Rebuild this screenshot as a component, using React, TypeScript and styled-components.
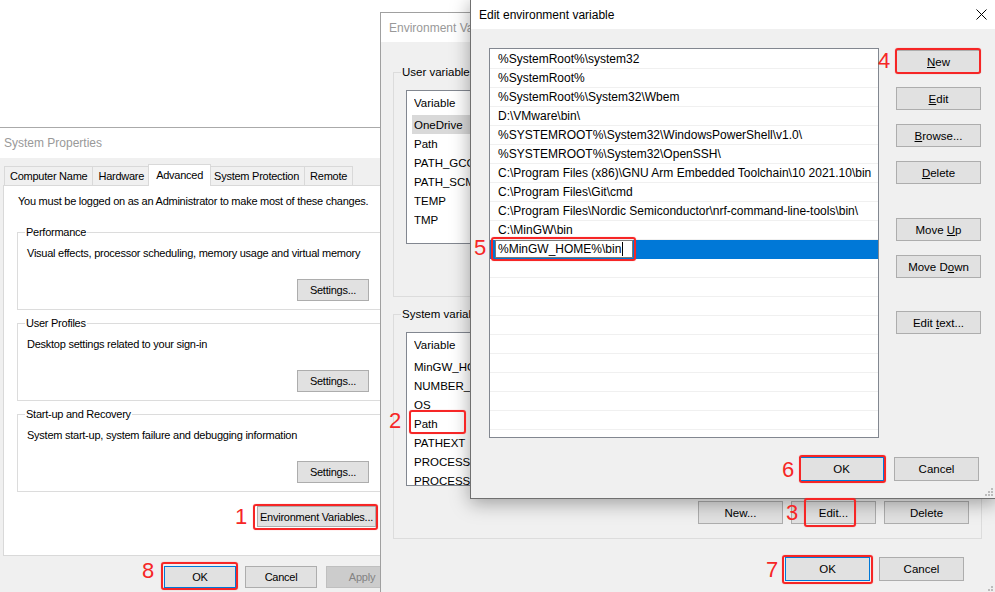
import React from 'react';
import styled, { createGlobalStyle } from 'styled-components';

const GlobalStyle = createGlobalStyle`
  html, body {
    margin: 0;
    padding: 0;
    background: #fff;
  }
  body {
    font-family: "Liberation Sans", Arial, sans-serif;
    color: #000;
  }
`;

const Desktop = styled.div`
  position: relative;
  width: 995px;
  height: 592px;
  overflow: hidden;
  background: #fff;
`;

// windows sit on a free desktop, so they are placed by coordinates
const Window = styled.div<{
  $x: number;
  $y: number;
  $w: number;
  $h: number;
  $z: number;
  $edge: string;
  $shadow?: boolean;
}>`
  position: absolute;
  left: ${(p) => p.$x}px;
  top: ${(p) => p.$y}px;
  width: ${(p) => p.$w}px;
  height: ${(p) => p.$h}px;
  z-index: ${(p) => p.$z};
  box-sizing: border-box;
  border: 1px solid ${(p) => p.$edge};
  background: #f0f0f0;
  display: flex;
  flex-direction: column;
  box-shadow: ${(p) => (p.$shadow ? '0 4px 18px rgba(0, 0, 0, 0.35)' : 'none')};
`;

const TitleBar = styled.div<{ $h: number; $indent: number; $active?: boolean }>`
  flex: none;
  height: ${(p) => p.$h}px;
  background: #fff;
  display: flex;
  align-items: center;
  padding-left: ${(p) => p.$indent}px;
  font-size: 12px;
  color: ${(p) => (p.$active ? '#000' : '#999')};
  white-space: nowrap;
`;

const CloseBox = styled.div`
  margin-left: auto;
  width: 30px;
  height: 100%;
  display: flex;
  align-items: center;
  justify-content: center;
`;

const Body = styled.div<{ $fs: number; $ls: number }>`
  flex: 1;
  min-height: 0;
  display: flex;
  flex-direction: column;
  align-items: flex-start;
  font-size: ${(p) => p.$fs}px;
  letter-spacing: ${(p) => p.$ls}px;
  line-height: 14px;
  white-space: nowrap;
`;

const SysBody = styled(Body)`
  padding: 8px 6px 0 6px;
`;

const EnvBody = styled(Body)`
  padding: 0 0 0 12px;
`;

const EditBody = styled(Body)`
  padding: 19px 0 0 18px;
`;

const Btn = styled.button<{ $w?: number; $h?: number; $default?: boolean }>`
  flex: none;
  box-sizing: border-box;
  width: ${(p) => p.$w ?? 85}px;
  height: ${(p) => p.$h ?? 23}px;
  margin: 0;
  padding: 0;
  background: #e1e1e1;
  border: 1px solid ${(p) => (p.$default ? '#0078d7' : '#adadad')};
  color: #000;
  font: inherit;
  letter-spacing: inherit;
  line-height: 14px;
  white-space: nowrap;

  &:disabled {
    background: #cccccc;
    border-color: #bfbfbf;
    color: #838383;
  }
`;

const DialogButtons = styled.div<{ $mt: number; $gap: number; $pr: number }>`
  align-self: stretch;
  display: flex;
  justify-content: flex-end;
  gap: ${(p) => p.$gap}px;
  margin-top: ${(p) => p.$mt}px;
  padding-right: ${(p) => p.$pr}px;
`;

/* ---------- System Properties ---------- */

const TabRow = styled.div`
  position: relative;
  z-index: 1;
  display: flex;
  align-items: flex-end;
  height: 20px;
  margin: 0 0 -1px 1px;
`;

const Tab = styled.div<{ $selected?: boolean }>`
  box-sizing: border-box;
  height: ${(p) => (p.$selected ? 22 : 19)}px;
  margin: 0 ${(p) => (p.$selected ? -2 : 0)}px ${(p) => (p.$selected ? 0 : 1)}px
    ${(p) => (p.$selected ? -2 : -1)}px;
  padding: ${(p) => (p.$selected ? '0 7px 2px' : '0 5px')};
  display: flex;
  align-items: center;
  border: 1px solid #d9d9d9;
  border-bottom: none;
  background: ${(p) => (p.$selected ? '#fff' : '#f0f0f0')};
  position: relative;
  z-index: ${(p) => (p.$selected ? 2 : 1)};

  &:first-child {
    margin-left: 0;
  }
`;

const TabPanel = styled.div`
  box-sizing: border-box;
  width: 395px;
  height: 371px;
  border: 1px solid #d9d9d9;
  background: #fff;
  display: flex;
  flex-direction: column;
  align-items: flex-start;
`;

const Notice = styled.div`
  margin: 8px 0 0 14px;
`;

const SysGroup = styled.div<{ $mt: number }>`
  box-sizing: border-box;
  width: 370px;
  height: 78px;
  margin: ${(p) => p.$mt}px 0 0 13px;
  border: 1px solid #dcdcdc;
  display: flex;
  flex-direction: column;
  align-items: flex-start;
`;

const Legend = styled.span<{ $bg: string }>`
  height: 14px;
  margin: -8px 0 0 7px;
  padding: 0 1px;
  background: ${(p) => p.$bg};
`;

const GroupText = styled.div`
  margin: 7px 0 0 9px;
`;

const SettingsBtn = styled(Btn)`
  align-self: flex-end;
  margin: 19px 17px 0 0;
`;

const EnvVarsBtn = styled(Btn)`
  align-self: flex-end;
  margin: 14px 21px 0 0;
`;

/* ---------- Environment Variables ---------- */

const EnvGroup = styled.div<{ $mt: number }>`
  box-sizing: border-box;
  width: 589px;
  height: 225px;
  margin-top: ${(p) => p.$mt}px;
  border: 1px solid #dcdcdc;
  display: flex;
  flex-direction: column;
  align-items: flex-start;
`;

const VarList = styled.div`
  box-sizing: border-box;
  width: 563px;
  height: 154px;
  margin: 11px 0 0 12px;
  padding-left: 5px;
  border: 1px solid #828790;
  background: #fff;
  overflow: hidden;
`;

const VarRow = styled.div<{ $header?: boolean; $selected?: boolean }>`
  display: flex;
  align-items: center;
  height: ${(p) => (p.$header ? 24 : 19)}px;
  padding-left: 2px;
  background: ${(p) => (p.$selected ? '#d9d9d9' : 'transparent')};
`;

const VarName = styled.span`
  width: 150px;
  overflow: hidden;
`;

const GroupButtons = styled.div`
  align-self: flex-end;
  display: flex;
  gap: 8px;
  margin: 15px 12px 0 0;
`;

/* ---------- Edit environment variable ---------- */

const EditMain = styled.div`
  display: flex;
  align-items: flex-start;
`;

const PathList = styled.div`
  box-sizing: border-box;
  width: 390px;
  height: 390px;
  padding-top: 1px;
  border: 1px solid #828790;
  background: #fff;
  overflow: hidden;
  font-size: 12px;
`;

const PathRow = styled.div<{ $selected?: boolean }>`
  box-sizing: border-box;
  height: 19px;
  display: flex;
  align-items: center;
  padding-left: ${(p) => (p.$selected ? 5 : 8)}px;
  border-bottom: 1px solid ${(p) => (p.$selected ? '#0078d7' : '#f0f0f0')};
  background: ${(p) => (p.$selected ? '#0078d7' : '#fff')};
`;

const InlineEdit = styled.div`
  box-sizing: border-box;
  width: 138px;
  height: 18px;
  display: flex;
  align-items: center;
  padding-left: 2px;
  background: #fff;
  border: 1px solid #7a7a7a;
`;

const Caret = styled.span`
  width: 1px;
  height: 14px;
  margin-left: 1px;
  background: #000;
`;

const SideButtons = styled.div`
  display: flex;
  flex-direction: column;
  margin: 2px 0 0 17px;
`;

const SideBtn = styled(Btn)<{ $mt: number }>`
  margin-top: ${(p) => p.$mt}px;
`;

const Grip = styled.svg<{ $b: number }>`
  position: absolute;
  right: 3px;
  bottom: ${(p) => p.$b}px;
`;

/* ---------- annotation overlay ---------- */

const Mark = styled.div<{ $x: number; $y: number; $w: number; $h: number }>`
  position: absolute;
  z-index: 10;
  left: ${(p) => p.$x}px;
  top: ${(p) => p.$y}px;
  width: ${(p) => p.$w}px;
  height: ${(p) => p.$h}px;
  box-sizing: border-box;
  border: 2px solid #f62626;
  border-radius: 3px;
  box-shadow: 0 0 1px rgba(246, 38, 38, 0.6);
`;

const StepNo = styled.div<{ $x: number; $y: number }>`
  position: absolute;
  z-index: 10;
  left: ${(p) => p.$x}px;
  top: ${(p) => p.$y}px;
  transform: translate(-50%, -50%);
  font-family: "Liberation Sans", Arial, sans-serif;
  font-size: 22px;
  line-height: 1;
  color: #f62626;
`;

const ResizeGrip = ({ bottom }: { bottom: number }) => (
  <Grip $b={bottom} width="9" height="9" viewBox="0 0 9 9">
    {[
      [7, 1],
      [4, 4],
      [7, 4],
      [1, 7],
      [4, 7],
      [7, 7],
    ].map(([x, y]) => (
      <rect key={`${x}-${y}`} x={x} y={y} width="2" height="2" fill="#bcbcbc" />
    ))}
  </Grip>
);

const tabs = ['Computer Name', 'Hardware', 'Advanced', 'System Protection', 'Remote'];

const sysGroups = [
  { title: 'Performance', text: 'Visual effects, processor scheduling, memory usage and virtual memory' },
  { title: 'User Profiles', text: 'Desktop settings related to your sign-in' },
  { title: 'Start-up and Recovery', text: 'System start-up, system failure and debugging information' },
];

const userVars = ['OneDrive', 'Path', 'PATH_GCC_ARM', 'PATH_SCMD', 'TEMP', 'TMP'];
const systemVars = [
  'MinGW_HOME',
  'NUMBER_OF_PROCESSORS',
  'OS',
  'Path',
  'PATHEXT',
  'PROCESSOR_ARCHITECTURE',
  'PROCESSOR_IDENTIFIER',
];

const paths = [
  '%SystemRoot%\\system32',
  '%SystemRoot%',
  '%SystemRoot%\\System32\\Wbem',
  'D:\\VMware\\bin\\',
  '%SYSTEMROOT%\\System32\\WindowsPowerShell\\v1.0\\',
  '%SYSTEMROOT%\\System32\\OpenSSH\\',
  'C:\\Program Files (x86)\\GNU Arm Embedded Toolchain\\10 2021.10\\bin',
  'C:\\Program Files\\Git\\cmd',
  'C:\\Program Files\\Nordic Semiconductor\\nrf-command-line-tools\\bin\\',
  'C:\\MinGW\\bin',
];

const marks = [
  { n: '1', nx: 241, ny: 517, x: 253, y: 504, w: 125, h: 26 },
  { n: '2', nx: 395, ny: 421, x: 409, y: 410, w: 57, h: 24 },
  { n: '3', nx: 792, ny: 513, x: 804, y: 498, w: 52, h: 29 },
  { n: '4', nx: 884, ny: 61, x: 895, y: 48, w: 86, h: 26 },
  { n: '5', nx: 480, ny: 248, x: 491, y: 237, w: 145, h: 24 },
  { n: '6', nx: 788, ny: 470, x: 799, y: 455, w: 87, h: 28 },
  { n: '7', nx: 772, ny: 570, x: 782, y: 555, w: 91, h: 29 },
  { n: '8', nx: 148, ny: 571, x: 161, y: 562, w: 77, h: 28 },
];

const Key = ({ children }: { children: string }) => <u>{children}</u>;

const App = () => (
  <>
    <GlobalStyle />
    <Desktop>
      <Window $x={-4} $y={127} $w={409} $h={480} $z={1} $edge="#aaaaaa">
        <TitleBar $h={30} $indent={7}>
          System Properties
        </TitleBar>
        <SysBody $fs={11} $ls={-0.25}>
          <TabRow>
            {tabs.map((t) => (
              <Tab key={t} $selected={t === 'Advanced'}>
                {t}
              </Tab>
            ))}
          </TabRow>
          <TabPanel>
            <Notice>You must be logged on as an Administrator to make most of these changes.</Notice>
            {sysGroups.map((g, i) => (
              <SysGroup key={g.title} $mt={i === 0 ? 24 : 13}>
                <Legend $bg="#fff">{g.title}</Legend>
                <GroupText>{g.text}</GroupText>
                <SettingsBtn $w={72} $h={22}>
                  Settings...
                </SettingsBtn>
              </SysGroup>
            ))}
            <EnvVarsBtn $w={119} $h={21}>
              Environment Variables...
            </EnvVarsBtn>
          </TabPanel>
          <DialogButtons $mt={10} $gap={9} $pr={0}>
            <Btn $w={72} $h={22} $default>
              OK
            </Btn>
            <Btn $w={72} $h={22}>
              Cancel
            </Btn>
            <Btn $w={72} $h={22} disabled>
              Apply
            </Btn>
          </DialogButtons>
        </SysBody>
      </Window>

      <Window $x={380} $y={12} $w={617} $h={584} $z={2} $edge="#a0a0a0">
        <TitleBar $h={29} $indent={8}>
          Environment Variables
        </TitleBar>
        <EnvBody $fs={11.5} $ls={0}>
          <EnvGroup $mt={30}>
            <Legend $bg="#f0f0f0">User variables for user</Legend>
            <VarList>
              <VarRow $header>
                <VarName>Variable</VarName>
                <span>Value</span>
              </VarRow>
              {userVars.map((v, i) => (
                <VarRow key={v} $selected={i === 0}>
                  <VarName>{v}</VarName>
                </VarRow>
              ))}
            </VarList>
            <GroupButtons>
              <Btn>New...</Btn>
              <Btn>Edit...</Btn>
              <Btn>Delete</Btn>
            </GroupButtons>
          </EnvGroup>
          <EnvGroup $mt={17}>
            <Legend $bg="#f0f0f0">System variables</Legend>
            <VarList>
              <VarRow $header>
                <VarName>Variable</VarName>
                <span>Value</span>
              </VarRow>
              {systemVars.map((v) => (
                <VarRow key={v}>
                  <VarName>{v}</VarName>
                </VarRow>
              ))}
            </VarList>
            <GroupButtons>
              <Btn>New...</Btn>
              <Btn>Edit...</Btn>
              <Btn>Delete</Btn>
            </GroupButtons>
          </EnvGroup>
          <DialogButtons $mt={18} $gap={9} $pr={32}>
            <Btn $h={24} $default>
              OK
            </Btn>
            <Btn $h={24}>Cancel</Btn>
          </DialogButtons>
        </EnvBody>
        <ResizeGrip bottom={1} />
      </Window>

      <Window $x={470} $y={-1} $w={527} $h={500} $z={3} $edge="#707070" $shadow>
        <TitleBar $h={29} $indent={8} $active>
          Edit environment variable
          <CloseBox>
            <svg width="11" height="11" viewBox="0 0 11 11">
              <path d="M0.5 0.5 L10.5 10.5 M10.5 0.5 L0.5 10.5" stroke="#000" strokeWidth="1" />
            </svg>
          </CloseBox>
        </TitleBar>
        <EditBody $fs={11.5} $ls={0}>
          <EditMain>
            <PathList>
              {paths.map((p) => (
                <PathRow key={p}>{p}</PathRow>
              ))}
              <PathRow $selected>
                <InlineEdit>
                  %MinGW_HOME%\bin
                  <Caret />
                </InlineEdit>
              </PathRow>
              {Array.from({ length: 10 }, (_, i) => (
                <PathRow key={`empty-${i}`} />
              ))}
            </PathList>
            <SideButtons>
              <SideBtn $mt={0}>
                <Key>N</Key>ew
              </SideBtn>
              <SideBtn $mt={14}>
                <Key>E</Key>dit
              </SideBtn>
              <SideBtn $mt={14}>
                <Key>B</Key>rowse...
              </SideBtn>
              <SideBtn $mt={14}>
                <Key>D</Key>elete
              </SideBtn>
              <SideBtn $mt={34}>
                Move <Key>U</Key>p
              </SideBtn>
              <SideBtn $mt={14}>
                Move D<Key>o</Key>wn
              </SideBtn>
              <SideBtn $mt={33}>
                Edit <Key>t</Key>ext...
              </SideBtn>
            </SideButtons>
          </EditMain>
          <DialogButtons $mt={19} $gap={10} $pr={17}>
            <Btn $h={24} $default>
              OK
            </Btn>
            <Btn $h={24}>Cancel</Btn>
          </DialogButtons>
        </EditBody>
        <ResizeGrip bottom={2} />
      </Window>

      {marks.map((m) => (
        <React.Fragment key={m.n}>
          <Mark $x={m.x} $y={m.y} $w={m.w} $h={m.h} />
          <StepNo $x={m.nx} $y={m.ny}>
            {m.n}
          </StepNo>
        </React.Fragment>
      ))}
    </Desktop>
  </>
);

export default App;
